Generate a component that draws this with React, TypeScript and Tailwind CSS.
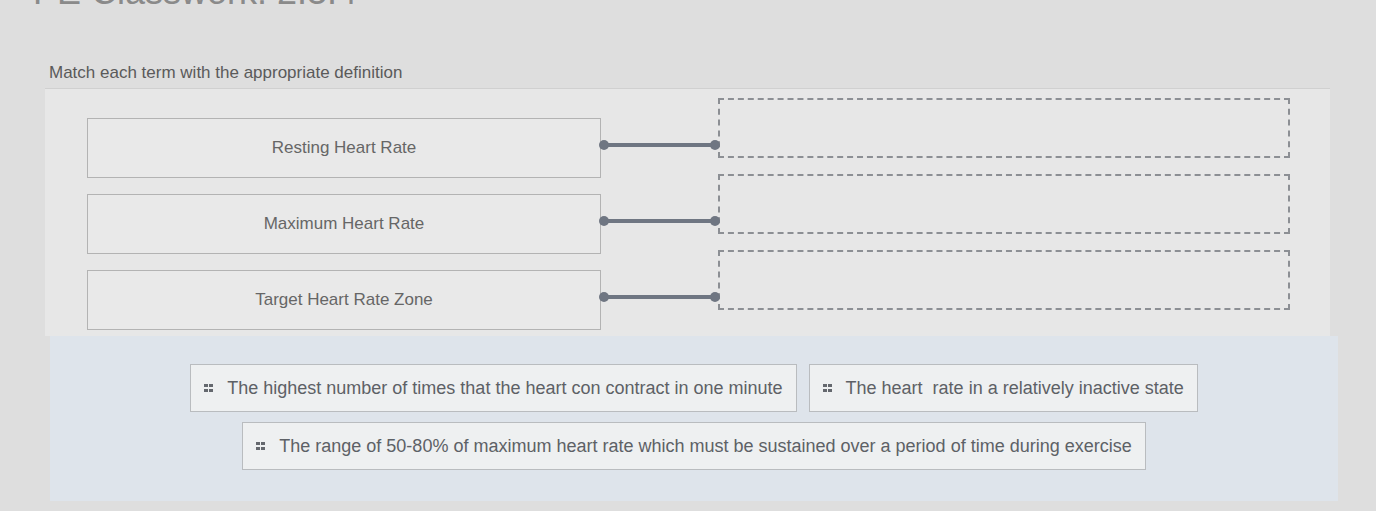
import React from 'react';

const terms = ['Resting Heart Rate', 'Maximum Heart Rate', 'Target Heart Rate Zone'];

const Grip: React.FC = () => (
  <svg width="10" height="10" viewBox="0 0 10 10" className="mr-[13px] shrink-0">
    <rect x="0" y="1" width="4" height="3" fill="#64686e" />
    <rect x="5" y="1" width="4" height="3" fill="#64686e" />
    <rect x="0" y="6" width="4" height="3" fill="#64686e" />
    <rect x="5" y="6" width="4" height="3" fill="#64686e" />
  </svg>
);

const Chip: React.FC<{ text: string }> = ({ text }) => (
  <div className="flex items-center h-[48px] px-[13px] bg-[#eef0f1] border border-[#b9bcbf] text-[#5d6166] text-[18px]">
    <Grip />
    <span className="whitespace-pre">{text}</span>
  </div>
);

const App: React.FC = () => {
  return (
    <div
      className="w-[1376px] h-[511px] overflow-hidden bg-[#dedede]"
      style={{ fontFamily: '"Liberation Sans", Arial, sans-serif' }}
    >
      {/* Title, cut off at top */}
      <div className="h-[40px] pl-[33px] -mt-[28px] text-[36px] text-[#8a8a8a] leading-[40px] whitespace-nowrap">
        PE Classwork: 2.3.4
      </div>

      <div className="ml-[45px] mr-[46px] mt-[51px]">
        <div className="pl-[4px] text-[17px] text-[#5a5a5a] leading-[20px] mb-[5px]">
          Match each term with the appropriate definition
        </div>

        {/* Matching panel */}
        <div className="bg-[#e7e7e7] border-t border-[#d0d0d0] pt-[9px] pb-[6px] pl-[42px] pr-[40px] flex flex-col gap-[16px]">
          {terms.map((t) => (
            <div key={t} className="flex h-[60px]">
              <div className="w-[514px] mt-[20px] h-[60px] shrink-0 bg-[#e9e9e9] border border-[#b3b3b3] flex items-center justify-center text-[17px] text-[#666]">
                {t}
              </div>
              <div className="w-[117px] mt-[20px] h-[54px] shrink-0 flex items-center">
                <div className="relative w-full h-[4px] bg-[#6f7682]">
                  <span className="absolute -left-[2px] -top-[3px] w-[10px] h-[10px] rounded-full bg-[#6f7682]" />
                  <span className="absolute -right-[2px] -top-[3px] w-[10px] h-[10px] rounded-full bg-[#6f7682]" />
                </div>
              </div>
              <div className="flex-1 h-[60px] border-2 border-dashed border-[#8c8f94]" />
            </div>
          ))}
          <div className="h-[4px]" />
        </div>

        {/* Answer bank */}
        <div className="bg-[#dee4eb] ml-[5px] -mr-[8px] pt-[28px] pb-[31px] px-[20px] flex flex-wrap justify-center gap-x-[12px] gap-y-[10px]">
          <Chip text="The highest number of times that the heart con contract in one minute" />
          <Chip text="The heart  rate in a relatively inactive state" />
          <Chip text="The range of 50-80% of maximum heart rate which must be sustained over a period of time during exercise" />
        </div>
      </div>
    </div>
  );
};

export default App;
